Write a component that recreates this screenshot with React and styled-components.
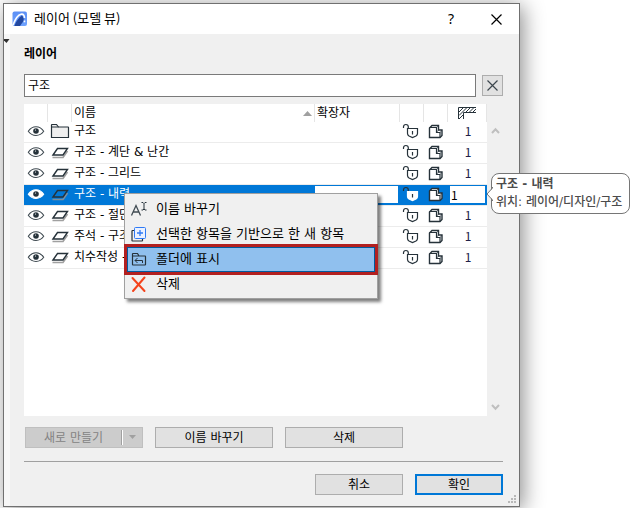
import React, { useState } from "react";
import styled, { createGlobalStyle } from "styled-components";

const rows = [
  { name: "구조", folder: true },
  { name: "구조 - 계단 & 난간" },
  { name: "구조 - 그리드" },
  { name: "구조 - 내력", selected: true },
  { name: "구조 - 절단" },
  { name: "주석 - 구조" },
  { name: "치수작성 - 구조" },
];

const GlobalStyle = createGlobalStyle`
  * {
    box-sizing: border-box;
  }

  body {
    margin: 0;
    background: #ffffff;
    overflow: hidden;
  }

  body, button, input {
    font-family: "DejaVu Sans", "Noto Sans CJK KR", sans-serif;
    font-size: 12px;
    color: #000000;
  }

  svg {
    display: block;
    flex: none;
  }
`;

const Page = styled.div`
  padding: 3px 110px 1px 3px;
`;

const Frame = styled.div`
  position: relative;
`;

const Dialog = styled.section`
  background: #f0f0f0;
  border: 1px solid #707070;
  box-shadow: 3px 3px 20px rgba(0, 0, 0, 0.45);
`;

const TitleBar = styled.header`
  display: flex;
  align-items: center;
  height: 30px;
  padding: 0 16px 0 8px;
  background: #ffffff;
`;

const Title = styled.h1`
  flex: 1;
  margin: 0 0 0 6px;
  padding-bottom: 2px;
  font: 400 13px/20px "Noto Sans CJK KR", sans-serif;
`;

const TitleButton = styled.button`
  display: flex;
  align-items: center;
  justify-content: center;
  width: 14px;
  height: 20px;
  margin-left: 31px;
  padding: 0;
  border: 0;
  background: none;
  font: 400 14px/20px "Noto Sans", sans-serif;
`;

const Body = styled.div`
  display: flex;
`;

const Strip = styled.div`
  width: 6px;
  padding-top: 5px;
  background: #f7f7f7;
`;

const Content = styled.main`
  flex: 1;
  min-width: 0;
  padding: 12px 16px 11px 14px;
`;

const Heading = styled.h2`
  margin: 0 0 12px;
  font-size: 12px;
  font-weight: 700;
  line-height: 16px;
`;

const SearchRow = styled.div`
  display: flex;
  align-items: center;
  gap: 6px;
`;

const SearchInput = styled.input`
  flex: 1;
  min-width: 0;
  height: 23px;
  padding: 0 3px 2px;
  border: 1px solid #7a7a7a;
  background: #ffffff;
  outline: none;
`;

const Button = styled.button`
  display: flex;
  align-items: center;
  justify-content: center;
  width: ${(props) => props.$width || 118}px;
  height: 21px;
  padding: 0;
  border: ${(props) => (props.$primary ? "2px solid #0078d7" : "1px solid #adadad")};
  background: #e1e1e1;
  line-height: 16px;

  &:disabled {
    border-color: #bfbfbf;
    background: #cccccc;
    color: #838383;
  }
`;

const ButtonText = styled.span`
  flex: 1;
`;

const Split = styled.span`
  display: flex;
  align-items: center;
  justify-content: center;
  width: 21px;
  height: 15px;
  border-left: 1px solid #a0a0a0;
  box-shadow: inset 1px 0 #ffffff;
`;

const ListArea = styled.div`
  display: flex;
  margin-top: 7px;
`;

const List = styled.div`
  position: relative;
  flex: 1;
  min-width: 0;
  min-height: 312px;
  background: #ffffff;
`;

const Scrollbar = styled.div`
  display: flex;
  flex-direction: column;
  align-items: center;
  justify-content: space-between;
  width: 16px;
  padding: 23px 0 5px;
`;

const Table = styled.table`
  width: 100%;
  table-layout: fixed;
  border-collapse: separate;
  border-spacing: 0;
`;

const Col = styled.col`
  width: ${(props) => props.$width}px;
`;

const HeadCell = styled.th`
  height: 18px;
  padding: 0 2px;
  border-right: 1px solid #e5e5e5;
  font-weight: 400;
  line-height: 16px;
  text-align: left;
`;

const HeadInner = styled.div`
  display: flex;
  align-items: center;
  justify-content: ${(props) => (props.$center ? "center" : "space-between")};
`;

const Row = styled.tr`
  background: ${(props) => (props.$selected ? "#0078d7" : "#ffffff")};
  color: ${(props) => (props.$selected ? "#ffffff" : "#000000")};
`;

const Cell = styled.td`
  height: 21px;
  padding: ${(props) => (props.$edit ? "0 2px 1px 0" : "0 2px 2px")};
  border-bottom: 1px solid #ececec;
  line-height: 16px;
  text-align: left;
  white-space: nowrap;
`;

const NumberCell = styled(Cell)`
  padding-left: ${(props) => (props.$edit ? 2 : 3)}px;
  color: #202048;
  font-family: "Noto Sans CJK KR", sans-serif;
  text-align: center;
`;

const CellButton = styled.button`
  display: block;
  padding: 0;
  border: 0;
  background: none;
`;

const CellInput = styled.input`
  display: block;
  width: 100%;
  height: 17px;
  padding: 0 1px;
  border: 0;
  background: #ffffff;
  font-family: "Noto Sans CJK KR", sans-serif;
  outline: none;
`;

const Menu = styled.div`
  position: absolute;
  top: 89px;
  left: 100px;
  z-index: 1;
  width: 254px;
  padding: 3px 2px 1px;
  border: 1px solid #a0a0a0;
  background: #f0f0f0;
  box-shadow: 3px 3px 3px rgba(0, 0, 0, 0.5);
`;

const MenuItem = styled.button`
  display: flex;
  align-items: center;
  gap: 8px;
  width: 100%;
  height: 25px;
  padding: 0 2px 2px;
  border: 1px solid ${(props) => (props.$active ? "#005a9e" : "transparent")};
  outline: ${(props) => (props.$active ? "3px solid #b22020" : "none")};
  background: ${(props) => (props.$active ? "#90c0ee" : "none")};
  font-size: 13px;
  line-height: 20px;
  text-align: left;
  white-space: nowrap;
`;

const Tooltip = styled.div`
  position: absolute;
  top: 69px;
  left: 100%;
  z-index: 1;
  margin-left: 4px;
  padding: 1px 7px 2px 4px;
  border: 1px solid #767676;
  border-radius: 8px;
  background: #ffffff;
  color: #4c4c4c;
  font-weight: 500;
  line-height: 18px;
  white-space: nowrap;
`;

const TooltipTitle = styled.strong`
  display: block;
  font-weight: 700;
`;

const Pointer = styled.svg`
  position: absolute;
  top: 13px;
  left: -6px;
`;

const Actions = styled.div`
  display: flex;
  gap: 12px;
  margin-top: 11px;
  padding-left: 1px;
`;

const Footer = styled.footer`
  display: flex;
  justify-content: flex-end;
  gap: 12px;
  margin-top: 13px;
  padding-top: 12px;
  border-top: 1px solid #a0a0a0;
`;

const Grip = styled.svg`
  position: absolute;
  right: 3px;
  bottom: 3px;
`;

const AppIcon = () => (
  <svg width="16" height="16" viewBox="0 0 16 16">
    <defs>
      <linearGradient id="logo" x1="0" y1="0" x2="0" y2="1">
        <stop offset="0" stopColor="#5b8ff5" />
        <stop offset="1" stopColor="#6fa3ff" />
      </linearGradient>
    </defs>
    <rect x="0.5" y="0.5" width="14.5" height="14.5" rx="2" fill="url(#logo)" />
    <path d="M2.5 14.5C4.500 9.500 7 6.500 10 4.500c1.800 2 2 4 1.500 5.500L8 15H2.500z" fill="#23489f" />
    <path d="M1 14C3 8.500 5.500 4 9 3.200c2.600-.4 3.400 1 3.500 3.800" fill="none" stroke="#fff" strokeWidth="1.6" />
    <path d="M12.500 9.500v1.800" stroke="#fff" strokeWidth="1.6" />
  </svg>
);

const CrossIcon = ({ size, color = "#000" }) => (
  <svg width={size} height={size} viewBox="0 0 11 11">
    <path d="M.5.5l10 10M10.500.5l-10 10" stroke={color} strokeWidth="1.2" />
  </svg>
);

const Eye = ({ selected }) => (
  <svg width="20" height="16" viewBox="0 0 20 16">
    <path
      d="M2.300 8.300C6.200 2.200 13.800 2.200 17.700 8.300 13.800 13.800 6.200 13.800 2.300 8.300z"
      fill="#fff"
      stroke={selected ? "#fff" : "#3d484f"}
      strokeWidth="1.1"
    />
    <circle cx="10" cy="8" r="2.800" fill="#26323a" />
    <circle cx="9.500" cy="7" r="0.600" fill="#fff" />
  </svg>
);

const Folder = () => (
  <svg width="20" height="16" viewBox="0 0 20 16">
    <path d="M1.500 14.500V2q0-.5.5-.5h4.500l2 2.500h9.500q.5 0 .5.5v10z" fill="#efefef" stroke="#26323a" strokeWidth="1.200" />
    <path d="M1.500 4h7" stroke="#26323a" />
  </svg>
);

const Layer = ({ selected }) => (
  <svg width="20" height="16" viewBox="0 0 20 16">
    <path d="M2.500 13.500h10.500l4.500-6.500" fill="none" stroke={selected ? "#7f8f9c" : "#a0a0a0"} strokeWidth="1.700" />
    <path
      d="M3 11L7.500 4.500h10l-4.500 6.500z"
      fill={selected ? "none" : "#fff"}
      stroke="#26323a"
      strokeWidth="1.400"
    />
  </svg>
);

const Lock = ({ selected }) => (
  <svg width="20" height="16" viewBox="0 0 20 16">
    <path d="M1.500 5V3.800q0-2.300 2.400-2.300t2.400 2.300V6" fill="none" stroke="#26323a" strokeWidth="1.200" />
    <path
      d="M5.500 5.500h10v5q0 1.500-1.500 2.500l-3.500 1.500L7 13q-1.500-1-1.500-2.500z"
      fill="#fff"
      stroke={selected ? "#fff" : "#26323a"}
      strokeWidth="1.200"
    />
    <path d="M10.500 8v3.500" stroke="#26323a" strokeWidth="1.200" />
  </svg>
);

const Solid = () => (
  <svg width="20" height="16" viewBox="0 0 20 16">
    <path d="M3.500 14.500V5L6 2.500h6.500V7h3.500v5.500l-2 2z" fill="#fff" stroke="#26323a" strokeWidth="1.400" />
    <path d="M3.500 4.500H10.500v5h3.500v5" fill="none" stroke="#26323a" strokeWidth="1.200" />
    <path d="M10.500 4.500l2-2M10.500 9.500l2-2.500M14 9.500l2-2.500" stroke="#26323a" strokeWidth="0.600" />
  </svg>
);

const WallJoin = () => (
  <svg width="18" height="14" viewBox="0 0 18 14">
    <path d="M.5 13V1.500H18M5.500 13V6.500H18" fill="none" stroke="#26323a" />
    <path
      d="M1 6l4-4M1 9.500L8.500 2M1 13l4-4M7.500 6.500L12 2M11 6.500L15.500 2M14.500 6.500L18 3"
      stroke="#26323a"
    />
  </svg>
);

const Triangle = ({ up, color }) => (
  <svg width="9" height="5" viewBox="0 0 9 5">
    <path d={up ? "M0 5l4.500-5L9 5z" : "M1 0h7L4.500 4z"} fill={color} />
  </svg>
);

const Chevron = ({ down }) => (
  <svg width="9" height="7" viewBox="0 0 9 7">
    <path d={down ? "M1 1l3.500 3.800L8 1" : "M1 6l3.500-3.800L8 6"} fill="none" stroke="#bfbfbf" strokeWidth="2" />
  </svg>
);

const RenameIcon = () => (
  <svg width="18" height="18" viewBox="0 0 18 18">
    <path d="M1.500 15.500l4.500-10 4.500 10M3 12h6" fill="none" stroke="#404b52" strokeWidth="1.300" />
    <path d="M11.500 2.500h1.500l1 1 1-1h1.500M14 3.500v5.500M11.500 10h1.500l1-1 1 1h1.500" fill="none" stroke="#26323a" />
  </svg>
);

const DuplicateIcon = () => (
  <svg width="18" height="18" viewBox="0 0 18 18">
    <path d="M4.500 5.500h-2q-.5 0-.5.5v9.500q0 .5.500.5H12q.5 0 .5-.5v-1.500" fill="none" stroke="#26323a" strokeWidth="1.200" />
    <rect x="4.500" y="2.500" width="11" height="11" rx="1" fill="#eaf1ff" stroke="#2f7af5" />
    <path d="M10 5v6M7 8h6" stroke="#2f7af5" strokeWidth="1.300" />
  </svg>
);

const ShowIcon = () => (
  <svg width="18" height="18" viewBox="0 0 18 18">
    <path
      d="M2.500 14.500V4q0-.5.5-.5h4.500l1.500 2.500h6q.5 0 .5.5v8q0 .5-.5.5H3q-.5 0-.5-.5M2.500 6H9"
      fill="none"
      stroke="#26323a"
      strokeWidth="1.200"
    />
    <path d="M12.500 13v-2.500H5M7.500 8L5 10.500 7.500 13" fill="none" stroke="#26323a" />
  </svg>
);

const DeleteIcon = () => (
  <svg width="18" height="18" viewBox="0 0 18 18">
    <path d="M2.500 3l12 13M14.500 2.500L3 16" stroke="#f4431c" strokeWidth="2" strokeLinecap="round" />
  </svg>
);

const menuItems = [
  { label: "이름 바꾸기", Icon: RenameIcon },
  { label: "선택한 항목을 기반으로 한 새 항목", Icon: DuplicateIcon },
  { label: "폴더에 표시", Icon: ShowIcon, active: true },
  { label: "삭제", Icon: DeleteIcon },
];

function App() {
  const [search, setSearch] = useState("구조");

  return (
    <Page>
      <GlobalStyle />
      <Frame>
        <Dialog>
          <TitleBar>
            <AppIcon />
            <Title>레이어 (모델 뷰)</Title>
            <TitleButton aria-label="도움말">?</TitleButton>
            <TitleButton aria-label="닫기">
              <CrossIcon size={11} />
            </TitleButton>
          </TitleBar>
          <Body>
            <Strip>
              <svg width="6" height="4" viewBox="0 0 6 4">
                <path d="M0 0h5.500L2.500 4 0 1.500z" fill="#303030" />
              </svg>
            </Strip>
            <Content>
              <Heading>레이어</Heading>
              <SearchRow>
                <SearchInput
                  aria-label="레이어"
                  value={search}
                  onChange={(e) => setSearch(e.target.value)}
                />
                <Button $width={21} aria-label="지우기" onClick={() => setSearch("")}>
                  <CrossIcon size={11} color="#3c464d" />
                </Button>
              </SearchRow>

              <ListArea>
                <List>
                  <Table>
                    <colgroup>
                      <Col $width={24} />
                      <Col $width={24} />
                      <col />
                      <Col $width={85} />
                      <Col $width={24} />
                      <Col $width={24} />
                      <Col $width={39} />
                    </colgroup>
                    <thead>
                      <tr>
                        <HeadCell />
                        <HeadCell />
                        <HeadCell>
                          <HeadInner>
                            이름
                            <Triangle up color="#a0a0a0" />
                          </HeadInner>
                        </HeadCell>
                        <HeadCell>확장자</HeadCell>
                        <HeadCell />
                        <HeadCell />
                        <HeadCell>
                          <HeadInner $center>
                            <WallJoin />
                          </HeadInner>
                        </HeadCell>
                      </tr>
                    </thead>
                    <tbody>
                      {rows.map((row) => (
                        <Row key={row.name} $selected={row.selected}>
                          <Cell>
                            <CellButton aria-label="보기">
                              <Eye selected={row.selected} />
                            </CellButton>
                          </Cell>
                          <Cell>{row.folder ? <Folder /> : <Layer selected={row.selected} />}</Cell>
                          <Cell>{row.name}</Cell>
                          <Cell $edit={row.selected}>
                            {row.selected && <CellInput aria-label="확장자" />}
                          </Cell>
                          <Cell>
                            <CellButton aria-label="잠금">
                              <Lock selected={row.selected} />
                            </CellButton>
                          </Cell>
                          <Cell>
                            <CellButton aria-label="모델 뷰">
                              <Solid />
                            </CellButton>
                          </Cell>
                          <NumberCell $edit={row.selected}>
                            {row.selected ? <CellInput aria-label="우선 순위" defaultValue="1" /> : "1"}
                          </NumberCell>
                        </Row>
                      ))}
                    </tbody>
                  </Table>

                  <Menu role="menu">
                    {menuItems.map(({ label, Icon, active }) => (
                      <MenuItem key={label} role="menuitem" $active={active}>
                        <Icon />
                        {label}
                      </MenuItem>
                    ))}
                  </Menu>

                  <Tooltip role="tooltip">
                    <Pointer width="7" height="14" viewBox="0 0 7 14">
                      <path d="M7 1L1 7l6 6" fill="#fff" />
                      <path d="M6.500 0v1L1 7l5.500 6v1" fill="none" stroke="#767676" />
                    </Pointer>
                    <TooltipTitle>구조 - 내력</TooltipTitle>
                    위치: 레이어/디자인/구조
                  </Tooltip>
                </List>
                <Scrollbar>
                  <Chevron />
                  <Chevron down />
                </Scrollbar>
              </ListArea>

              <Actions>
                <Button disabled>
                  <ButtonText>새로 만들기</ButtonText>
                  <Split>
                    <Triangle color="#a0a0a0" />
                  </Split>
                </Button>
                <Button>이름 바꾸기</Button>
                <Button>삭제</Button>
              </Actions>

              <Footer>
                <Button $width={88}>취소</Button>
                <Button $width={88} $primary>
                  확인
                </Button>
              </Footer>
            </Content>
          </Body>
        </Dialog>
        <Grip width="9" height="9" viewBox="0 0 9 9">
          <path d="M6 0h2v2H6zM3 3h2v2H3zM6 3h2v2H6zM0 6h2v2H0zM3 6h2v2H3zM6 6h2v2H6z" fill="#b8b8b8" />
        </Grip>
      </Frame>
    </Page>
  );
}

export default App;
